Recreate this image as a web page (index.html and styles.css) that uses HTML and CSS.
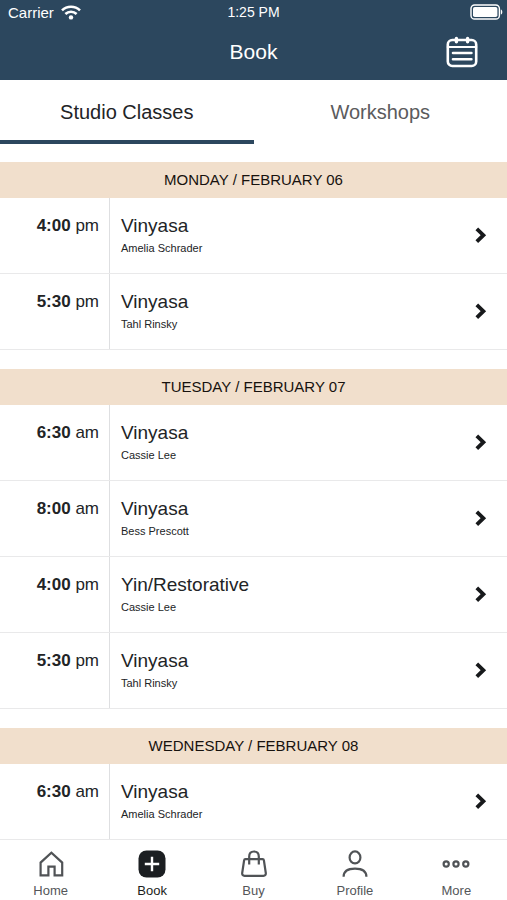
FILE: index.html
```html
<!DOCTYPE html>
<html lang="en">
<head>
  <meta charset="UTF-8" />
  <meta name="viewport" content="width=device-width, initial-scale=1.0"/>
  <title>Book</title>
  <link rel="stylesheet" href="styles.css">
</head>
<body>

  <header class="app-header">
    <div class="status-bar">
      <div class="carrier">
        <span>Carrier</span>
        <svg width="20" height="15" viewBox="0 0 20 15" fill="none" stroke="#fff" stroke-width="2.6">
          <path d="M1 5.4a13 13 0 0 1 18 0"/>
          <path d="M4.4 9a8 8 0 0 1 11.2 0"/>
          <circle cx="10" cy="12.4" r="2.2" fill="#fff" stroke="none"/>
        </svg>
      </div>
      <div class="clock">1:25 PM</div>
      <svg class="battery" width="33" height="16" viewBox="0 0 33 16">
        <rect x="1" y="1" width="28.4" height="14" rx="3.6" fill="none" stroke="#fff" stroke-width="1.4"/>
        <rect x="3" y="3" width="24.4" height="10" rx="1.8" fill="#fff"/>
        <path d="M30.8 5.4c2 .6 2 4.6 0 5.2z" fill="#fff"/>
      </svg>
    </div>
    <div class="title-bar">
      <h1>Book</h1>
      <button type="button" class="calendar-btn" aria-label="Calendar">
        <svg width="32" height="32" viewBox="0 0 32 32" fill="none" stroke="#fff" stroke-width="2.6" stroke-linecap="round">
          <rect x="1.8" y="4" width="28.4" height="26" rx="4.5"/>
          <path d="M10.4 2.4v3.4M21.6 2.4v3.4" stroke-width="3.4"/>
          <path d="M1.8 11h28.4" stroke-width="2.2"/>
          <path d="M7 17h18.4M7 23.2h18.4"/>
        </svg>
      </button>
    </div>
  </header>

  <div class="tabs">
    <button type="button" class="tab active">Studio Classes</button>
    <button type="button" class="tab">Workshops</button>
  </div>

  <main>
    <section class="day">
      <h2>MONDAY / FEBRUARY 06</h2>
      <a href="#" class="class-row">
        <span class="time"><b>4:00</b> pm</span>
        <span class="info"><span class="name">Vinyasa</span><span class="teacher">Amelia Schrader</span></span>
        <svg class="chevron" width="12" height="18" viewBox="0 0 12 18"><path d="M1.8 1.8l6.6 6.4-6.6 6.4"/></svg>
      </a>
      <a href="#" class="class-row">
        <span class="time"><b>5:30</b> pm</span>
        <span class="info"><span class="name">Vinyasa</span><span class="teacher">Tahl Rinsky</span></span>
        <svg class="chevron" width="12" height="18" viewBox="0 0 12 18"><path d="M1.8 1.8l6.6 6.4-6.6 6.4"/></svg>
      </a>
    </section>

    <section class="day">
      <h2>TUESDAY / FEBRUARY 07</h2>
      <a href="#" class="class-row">
        <span class="time"><b>6:30</b> am</span>
        <span class="info"><span class="name">Vinyasa</span><span class="teacher">Cassie Lee</span></span>
        <svg class="chevron" width="12" height="18" viewBox="0 0 12 18"><path d="M1.8 1.8l6.6 6.4-6.6 6.4"/></svg>
      </a>
      <a href="#" class="class-row">
        <span class="time"><b>8:00</b> am</span>
        <span class="info"><span class="name">Vinyasa</span><span class="teacher">Bess Prescott</span></span>
        <svg class="chevron" width="12" height="18" viewBox="0 0 12 18"><path d="M1.8 1.8l6.6 6.4-6.6 6.4"/></svg>
      </a>
      <a href="#" class="class-row">
        <span class="time"><b>4:00</b> pm</span>
        <span class="info"><span class="name">Yin/Restorative</span><span class="teacher">Cassie Lee</span></span>
        <svg class="chevron" width="12" height="18" viewBox="0 0 12 18"><path d="M1.8 1.8l6.6 6.4-6.6 6.4"/></svg>
      </a>
      <a href="#" class="class-row">
        <span class="time"><b>5:30</b> pm</span>
        <span class="info"><span class="name">Vinyasa</span><span class="teacher">Tahl Rinsky</span></span>
        <svg class="chevron" width="12" height="18" viewBox="0 0 12 18"><path d="M1.8 1.8l6.6 6.4-6.6 6.4"/></svg>
      </a>
    </section>

    <section class="day">
      <h2>WEDNESDAY / FEBRUARY 08</h2>
      <a href="#" class="class-row">
        <span class="time"><b>6:30</b> am</span>
        <span class="info"><span class="name">Vinyasa</span><span class="teacher">Amelia Schrader</span></span>
        <svg class="chevron" width="12" height="18" viewBox="0 0 12 18"><path d="M1.8 1.8l6.6 6.4-6.6 6.4"/></svg>
      </a>
    </section>
  </main>

  <nav class="bottom-nav">
    <a href="#">
      <svg width="28" height="28" viewBox="0 0 28 28"><path d="M3.6 25.4V12.6L14.4 2.8l10.8 9.8v12.8h-7.6v-8.8h-6.2v8.8z"/></svg>
      <span>Home</span>
    </a>
    <a href="#" class="active">
      <svg width="28" height="28" viewBox="0 0 28 28">
        <rect class="plus-bg" x="0.5" y="0.5" width="27" height="27" rx="8"/>
        <path class="plus" d="M14 6.8v14.4M6.8 14h14.4"/>
      </svg>
      <span>Book</span>
    </a>
    <a href="#">
      <svg width="28" height="28" viewBox="0 0 28 28">
        <path d="M5.4 9.2h17.2c.8 0 1.2.4 1.3 1.1l1.9 12.7c.2 1.8-.7 2.8-2.3 2.8H4.5c-1.6 0-2.5-1-2.3-2.8l1.9-12.7c.1-.7.5-1.1 1.3-1.1z"/>
        <path d="M9.2 14.6V6.4c0-3 1.8-4.9 4.8-4.9s4.8 1.9 4.8 4.9v8.2"/>
      </svg>
      <span>Buy</span>
    </a>
    <a href="#">
      <svg width="28" height="28" viewBox="0 0 28 28">
        <ellipse cx="14" cy="7.4" rx="5.4" ry="6"/>
        <path d="M2.6 26.8c0-5 4-8.2 11.4-8.2s11.4 3.2 11.4 8.2"/>
      </svg>
      <span>Profile</span>
    </a>
    <a href="#">
      <svg width="28" height="28" viewBox="0 0 28 28">
        <circle cx="4.2" cy="14" r="2.6"/>
        <circle cx="14" cy="14" r="2.6"/>
        <circle cx="23.8" cy="14" r="2.6"/>
      </svg>
      <span>More</span>
    </a>
  </nav>

</body>
</html>
```
FILE: styles.css
```css
* {
  box-sizing: border-box;
}

body {
  font-family: "Liberation Sans", Arial, Helvetica, sans-serif;
  background: #ffffff;
  color: #222426;
  margin: 0;
  min-height: 100vh;
  display: flex;
  flex-direction: column;
}

a {
  color: inherit;
  text-decoration: none;
}

button {
  font-family: inherit;
  background: none;
  border: none;
  padding: 0;
  cursor: pointer;
}

svg {
  display: block;
}

/* header */
.app-header {
  background: #2c475e;
  color: #ffffff;
}

.status-bar {
  display: grid;
  grid-template-columns: 1fr auto 1fr;
  align-items: center;
  height: 24px;
  padding: 0 4px;
  font-size: 15px;
}

.carrier {
  display: flex;
  align-items: center;
  gap: 7px;
  padding-left: 4px;
}

.clock {
  font-size: 14px;
}

.battery {
  justify-self: end;
}

.title-bar {
  display: grid;
  grid-template-columns: 1fr auto 1fr;
  align-items: center;
  height: 56px;
  padding: 0 29px;
}

.title-bar h1 {
  grid-column: 2;
  margin: 0;
  font-size: 21px;
  font-weight: normal;
}

.calendar-btn {
  justify-self: end;
}

/* tabs */
.tabs {
  display: flex;
}

.tab {
  flex: 1;
  height: 64px;
  padding-top: 4px;
  border-bottom: 4px solid transparent;
  font-size: 20px;
  color: #5b5b5d;
}

.tab.active {
  color: #222426;
  border-bottom-color: #2c475e;
}

/* schedule */
main {
  flex: 1;
  padding-top: 18px;
}

.day + .day {
  margin-top: 19px;
}

.day h2 {
  margin: 0;
  background: #f1dfcc;
  color: #17120e;
  font-size: 15px;
  font-weight: normal;
  line-height: 36px;
  text-align: center;
}

.class-row {
  display: flex;
  height: 76px;
  padding-right: 20px;
  border-bottom: 1px solid #e9e9ea;
}

.time {
  width: 110px;
  padding: 16px 10px 0 0;
  border-right: 1px solid #dedfe1;
  font-size: 17px;
  line-height: 24px;
  text-align: right;
}

.info {
  flex: 1;
  padding: 16px 0 0 11px;
}

.name,
.teacher {
  display: block;
}

.name {
  font-size: 19px;
  line-height: 24px;
}

.teacher {
  font-size: 11px;
  line-height: 20px;
}

.chevron {
  align-self: center;
  fill: none;
  stroke: #17191b;
  stroke-width: 3.8;
}

/* bottom nav */
.bottom-nav {
  position: sticky;
  bottom: 0;
  display: flex;
  height: 60px;
  padding-top: 10px;
  background: #ffffff;
}

.bottom-nav a {
  flex: 1;
  display: flex;
  flex-direction: column;
  align-items: center;
  gap: 5px;
  font-size: 13px;
  line-height: 16px;
  color: #545659;
}

.bottom-nav svg {
  fill: none;
  stroke: #505356;
  stroke-width: 2.2;
}

.bottom-nav .active {
  color: #1c1e20;
}

.bottom-nav .plus-bg {
  fill: #1c1f22;
  stroke: none;
}

.bottom-nav .plus {
  stroke: #ffffff;
  stroke-width: 2.4;
}
```
